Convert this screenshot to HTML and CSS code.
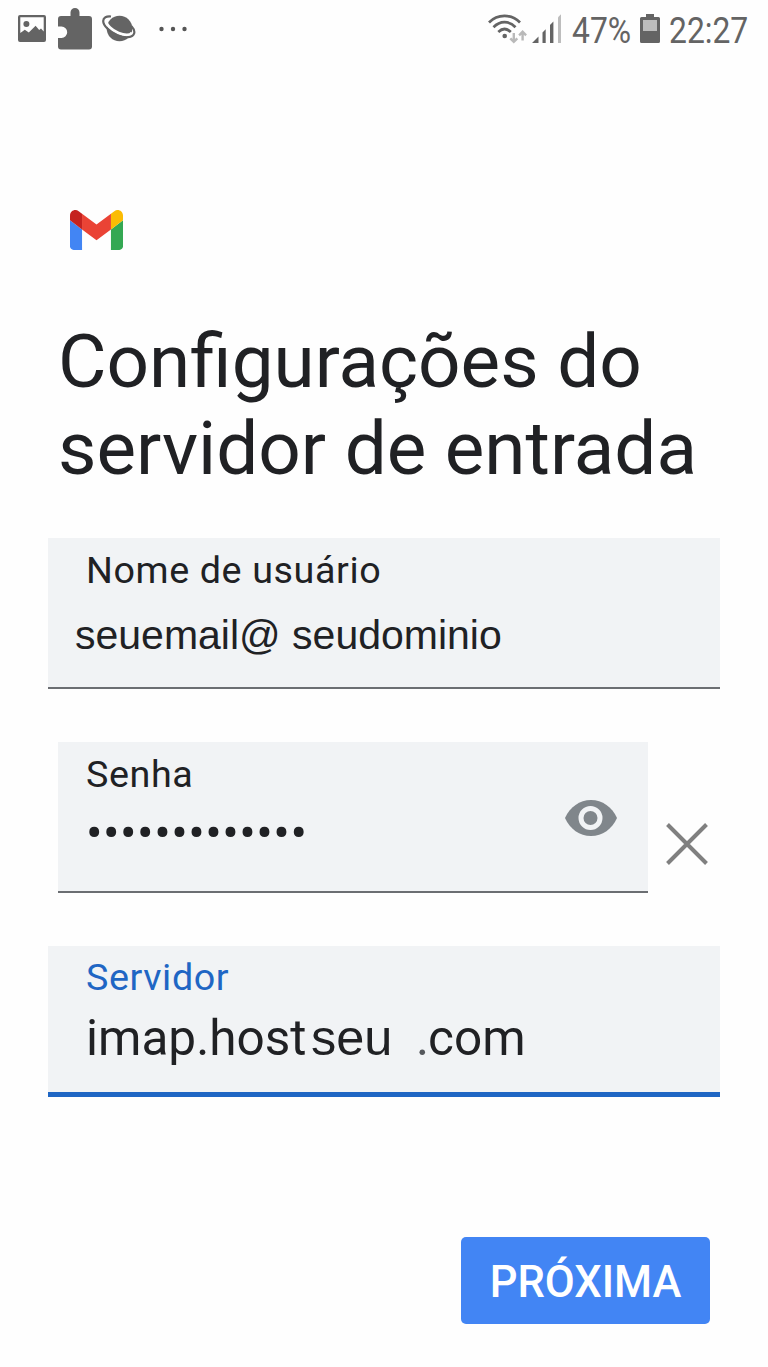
FILE: index.html
```html
<!DOCTYPE html>
<html lang="pt-BR">
<head>
  <meta charset="UTF-8" />
  <title>Configurações do servidor de entrada</title>
  <link rel="stylesheet" href="styles.css">
</head>
<body>
  <header class="status-bar">
    <div class="status-left">
      <svg class="icon-picture" viewBox="0 0 28 28" width="28" height="28">
        <path fill="#646464" fill-rule="evenodd" d="M2 0h24a2 2 0 0 1 2 2v23a2 2 0 0 1-2 2H2a2 2 0 0 1-2-2V2a2 2 0 0 1 2-2zM2.3 2.3v15.7l4.500-3.200 4 2.600 6.800-6.600 3.600 4.100 1.800-1.300 2.700 3V2.300z"/>
        <circle cx="8.400" cy="9" r="3" fill="#646464"/>
      </svg>
      <svg class="icon-puzzle" viewBox="0 0 34 42" width="34" height="42">
        <path fill="#646464" d="M3 8h9.500V4.500a4.500 4.500 0 0 1 9 0V8H31a3 3 0 0 1 3 3v27.500a3 3 0 0 1-3 3H3a3 3 0 0 1-3-3V30h3.500a5.700 5.700 0 0 0 0-11.400H0V11a3 3 0 0 1 3-3z"/>
      </svg>
      <svg class="icon-planet" viewBox="0 0 34 28" width="34" height="28">
        <circle cx="17.500" cy="13.500" r="12.800" fill="#646464"/>
        <path fill="none" stroke="#fefefe" stroke-width="3" d="M4.500 6C4 10 10 15.500 16.500 18.200c6 2.400 12 2.800 13.500-.700"/>
        <path fill="none" stroke="#646464" stroke-width="2.200" d="M9 1.500C4.500 1 1.200 2.500 1.200 6c0 4.500 6.300 11 14.300 14.300 7.500 3 15.500 2.700 16.700-2 .6-2.300-.4-4.500-2.700-7"/>
      </svg>
      <svg class="icon-more" viewBox="0 0 28 6" width="28" height="6">
        <g fill="#555"><circle cx="2.500" cy="3" r="2.200"/><circle cx="14" cy="3" r="2.200"/><circle cx="25.500" cy="3" r="2.200"/></g>
      </svg>
    </div>
    <div class="status-right">
      <svg class="icon-wifi" viewBox="0 0 39 30" width="39" height="30">
        <g fill="none" stroke="#646464" stroke-width="2.700">
          <path d="M1 8.500C9.500-.300 23.500-.300 32 8.500"/>
          <path d="M5.500 13.300c6.500-6.800 15.500-6.800 22 0"/>
          <path d="M10.300 18c4-3.800 8.500-3.800 12.500 0"/>
        </g>
        <circle cx="16.700" cy="22" r="2.300" fill="#646464"/>
        <path fill="none" stroke="#b9b9b9" stroke-width="2.400" d="M25.800 19v9M22.300 24.300l3.500 3.600 3.500-3.600M34.600 26.500v-9M31.100 21.300l3.500-3.600 3.500 3.600"/>
      </svg>
      <svg class="icon-signal" viewBox="0 0 30 30" width="30" height="30">
        <path fill="#646464" d="M0 29l6.500-6.500V29zM10.500 18.500l3.200-3.200V29h-3.200zM18 11l3.400-3.400V29H18z"/>
        <path fill="#bdbdbd" d="M26 3.300L29 .300V29h-3z"/>
      </svg>
      <span class="status-text battery-level">47%</span>
      <svg class="icon-battery" viewBox="0 0 20 30" width="20" height="30">
        <path fill="#646464" d="M6 0h8v3h4.500A1.500 1.500 0 0 1 20 4.500v23a1.500 1.500 0 0 1-1.500 1.500h-17A1.500 1.500 0 0 1 0 27.500v-23A1.500 1.500 0 0 1 1.500 3H6z"/>
        <path fill="#bdbdbd" d="M3 6h14v11H3z"/>
      </svg>
      <span class="status-text clock">22:27</span>
    </div>
  </header>

  <main class="setup">
    <svg class="gmail-logo" viewBox="52 42 88 66" width="53" height="40">
      <path fill="#4285f4" d="M58 108h14V74L52 59v43c0 3.320 2.690 6 6 6"/>
      <path fill="#34a853" d="M120 108h14c3.320 0 6-2.690 6-6V59l-20 15"/>
      <path fill="#fbbc04" d="M120 48v26l20-15v-8c0-7.420-8.470-11.650-14.400-7.200"/>
      <path fill="#ea4335" d="M72 74V48l24 18 24-18v26L96 92"/>
      <path fill="#c5221f" d="M52 51v8l20 15V48l-5.600-4.200c-5.940-4.450-14.400-.220-14.400 7.200"/>
    </svg>

    <h1>Configurações do<br>servidor de entrada</h1>

    <div class="field user-field">
      <span class="label">Nome de usuário</span>
      <span class="value email">seuemail@ seudominio</span>
    </div>

    <div class="password-row">
      <div class="field password-field">
        <div class="field-text">
          <span class="label">Senha</span>
          <span class="value dots">•••••••••••••</span>
        </div>
        <svg class="icon-eye" viewBox="0 0 54 38" width="54" height="38">
          <path fill="#80868b" d="M1 19C6 8 15.500 1 27 1s21 7 26 18c-5 11-14.500 18-26 18S6 30 1 19z"/>
          <circle cx="26.500" cy="19" r="9.500" fill="#80868b" stroke="#f1f3f5" stroke-width="5"/>
        </svg>
      </div>
      <svg class="icon-close" viewBox="0 0 42 42" width="42" height="42">
        <path fill="none" stroke="#808080" stroke-width="4" d="M1.500 1.500l39 39M40.500 1.500l-39 39"/>
      </svg>
    </div>

    <div class="field server-field">
      <span class="label">Servidor</span>
      <div class="value server"><span class="host">imap.host</span><span class="host-name">seu</span><span class="dot">.</span><span>com</span></div>
    </div>

    <button class="next">PRÓXIMA</button>
  </main>
</body>
</html>
```

FILE: styles.css
```css
* {
  box-sizing: border-box;
}
body {
  margin: 0;
  font-family: Roboto, sans-serif;
  background-color: #fefefe;
  color: #202124;
}
svg {
  display: block;
  flex: none;
}
.status-bar {
  display: flex;
  justify-content: space-between;
  height: 60px;
  padding: 0 17px 0 18px;
}
.status-left,
.status-right {
  display: flex;
  align-items: flex-start;
}
.icon-picture {
  margin-top: 15px;
}
.icon-puzzle {
  margin: 8px 0 0 12px;
}
.icon-planet {
  margin: 15px 0 0 10px;
}
.icon-more {
  margin: 26px 0 0 23px;
}
.icon-wifi {
  margin-top: 14px;
}
.icon-signal {
  margin: 14px 0 0 5px;
}
.status-text {
  font-size: 36.6px;
  line-height: 44px;
  margin-top: 9px;
  color: #646464;
  white-space: nowrap;
  transform: scaleX(0.87);
  transform-origin: left;
}
.battery-level {
  width: 68px;
  margin-left: 10px;
}
.icon-battery {
  margin: 14px 0 0 0;
}
.clock {
  width: 82px;
  margin-left: 9px;
}
.setup {
  display: flex;
  flex-direction: column;
  padding: 150px 48px 0;
}
.gmail-logo {
  margin-left: 22px;
}
h1 {
  margin: 67.5px 0 0 10px;
  font-size: 74.6px;
  line-height: 87.5px;
  font-weight: normal;
  white-space: nowrap;
}
.field {
  height: 151px;
  padding: 10px 38px 0;
  background-color: #f1f3f5;
  border-bottom: 2px solid #6b6e72;
}
.user-field {
  margin-top: 45.5px;
}
.label {
  display: block;
  font-size: 37.7px;
  line-height: 44px;
  letter-spacing: 0.6px;
}
.value {
  display: block;
  height: 58px;
  margin-top: 8px;
  font-size: 49px;
  line-height: 58px;
  white-space: nowrap;
}
.email {
  margin: 14px 0 0 -11px;
  font-family: "Liberation Sans", Arial, sans-serif;
  font-size: 41px;
}
.password-row {
  display: flex;
  margin: 53px 0 0 10px;
}
.password-field {
  display: flex;
  justify-content: space-between;
  width: 590px;
  padding: 10px 30px 0 28px;
}
.dots {
  margin-top: 9px;
  letter-spacing: 0.5px;
}
.icon-eye {
  margin-top: 47px;
}
.icon-close {
  margin: 81px 0 0 18px;
}
.server-field {
  margin-top: 53px;
  padding-top: 9px;
  border-bottom: 5px solid #1f66c4;
}
.server-field .label {
  color: #1f66c4;
}
.server {
  display: flex;
  align-items: baseline;
  margin-top: 10px;
  font-size: 49.5px;
}
.host {
  width: 225px;
}
.host-name {
  width: 106px;
  font-family: "Liberation Sans", Arial, sans-serif;
  font-size: 50.5px;
}
.dot {
  width: 12px;
  margin-left: -1px;
  color: #55585c;
}
.next {
  align-self: flex-end;
  width: 249px;
  height: 87px;
  margin: 140px 10px 0 0;
  padding: 4px 0 0;
  border: none;
  border-radius: 5px;
  background-color: #4285f4;
  color: #fff;
  font-family: Roboto, sans-serif;
  font-size: 43.5px;
  font-weight: 500;
}
```
